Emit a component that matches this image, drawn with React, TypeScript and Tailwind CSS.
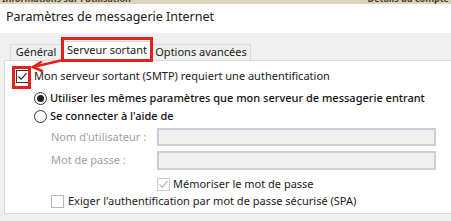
import React from "react";

const font = { fontFamily: '"Noto Sans", "Open Sans", sans-serif' };

function CheckBox({ checked, tone }: { checked?: boolean; tone: "dark" | "disabled" | "light" }) {
  const border = tone === "dark" ? "border-[#333333]" : tone === "disabled" ? "border-[#cccccc]" : "border-[#b8b8b8]";
  const stroke = tone === "dark" ? "#222222" : "#b4b4b4";
  return (
    <span className={`flex h-[13px] w-[13px] shrink-0 items-center justify-center border bg-white ${border}`}>
      {checked && (
        <svg width="11" height="11" viewBox="0 0 11 11">
          <path d="M1.5 5.5 L4.2 8.2 L9.5 2.2" fill="none" stroke={stroke} strokeWidth="1.1" />
        </svg>
      )}
    </span>
  );
}

function Radio({ checked }: { checked?: boolean }) {
  return (
    <span className="flex h-[13px] w-[13px] shrink-0 items-center justify-center rounded-full border border-[#333333] bg-white">
      {checked && <span className="h-[7px] w-[7px] rounded-full bg-[#222222]" />}
    </span>
  );
}

export default function App() {
  return (
    <div className="relative flex h-[221px] w-[451px] flex-col overflow-hidden bg-white text-[11px] text-[#1a1a1a]" style={font}>
      {/* bord de la fenêtre derrière */}
      <div className="h-[4px] shrink-0 overflow-hidden bg-[#dcd3bc]">
        <div className="-mt-[6px] flex justify-between px-[2px] text-[9px] leading-[10px] font-bold text-[#4a4030]">
          <span>Informations sur l'utilisation</span>
          <span>Détails du compte</span>
        </div>
      </div>

      <div className="flex h-[29px] shrink-0 items-center px-[6px] pb-[2px] text-[12.5px] text-[#202020]">
        Paramètres de messagerie Internet
      </div>

      <div className="flex flex-1 flex-col bg-[#f0f0f0] pt-[10px]">
        <div className="flex h-[17px] items-end pl-[10px]">
          <div className="flex h-[16px] w-[52px] items-center justify-center border border-b-0 border-[#d9d9d9]">Général</div>
          <div className="-mb-[1px] flex h-[20px] w-[90px] items-center justify-center border border-b-0 border-[#d9d9d9] bg-white pb-[2px]">
            Serveur sortant
          </div>
          <div className="flex h-[16px] w-[99px] items-center justify-center border border-b-0 border-l-0 border-[#d9d9d9]">
            Options avancées
          </div>
        </div>

        <div className="ml-[4px] flex h-[154px] flex-col border border-r-0 border-[#d9d9d9] bg-white">
          <div className="mt-[6px] flex h-[18px] items-center gap-[5px] pl-[11px]">
            <CheckBox checked tone="dark" />
            <span>Mon serveur sortant (SMTP) requiert une authentification</span>
          </div>
          <div className="mt-[4px] flex h-[18px] items-center gap-[3px] pl-[29px] font-medium text-[#111111]">
            <Radio checked />
            <span>Utiliser les mêmes paramètres que mon serveur de messagerie entrant</span>
          </div>
          <div className="flex h-[18px] items-center gap-[3px] pl-[29px] font-medium text-[#111111]">
            <Radio />
            <span>Se connecter à l'aide de</span>
          </div>
          <div className="mt-[3px] flex h-[18px] items-center pl-[46px]">
            <span className="w-[106px] text-[#a0a0a0]">Nom d'utilisateur :</span>
            <div className="h-full w-[279px] border-2 border-[#c9ced7] bg-[#f0f0f0]" />
          </div>
          <div className="mt-[5px] flex h-[19px] items-center pl-[46px]">
            <span className="w-[106px] text-[#a0a0a0]">Mot de passe :</span>
            <div className="h-full w-[279px] border-2 border-[#c9ced7] bg-[#f0f0f0]" />
          </div>
          <div className="mt-[6px] flex h-[16px] items-center gap-[3px] pl-[152px]">
            <CheckBox checked tone="disabled" />
            <span>Mémoriser le mot de passe</span>
          </div>
          <div className="mt-[1px] flex h-[16px] items-center gap-[4px] pl-[46px]">
            <CheckBox tone="light" />
            <span>Exiger l'authentification par mot de passe sécurisé (SPA)</span>
          </div>
        </div>
      </div>

      {/* annotations rouges */}
      <div className="absolute left-[61px] top-[37px] h-[25px] w-[92px] border-[3px] border-[#e3231b]" />
      <div className="absolute left-[12px] top-[66px] h-[23px] w-[19px] border-[3px] border-[#e3231b]" />
      <svg className="absolute left-0 top-0" width="451" height="221" viewBox="0 0 451 221">
        <g stroke="#e3231b" strokeWidth="2.5" fill="none" strokeLinecap="round">
          <path d="M63 60 L33 67" />
          <path d="M41 62 L33 67 L42 71" />
        </g>
      </svg>
    </div>
  );
}
